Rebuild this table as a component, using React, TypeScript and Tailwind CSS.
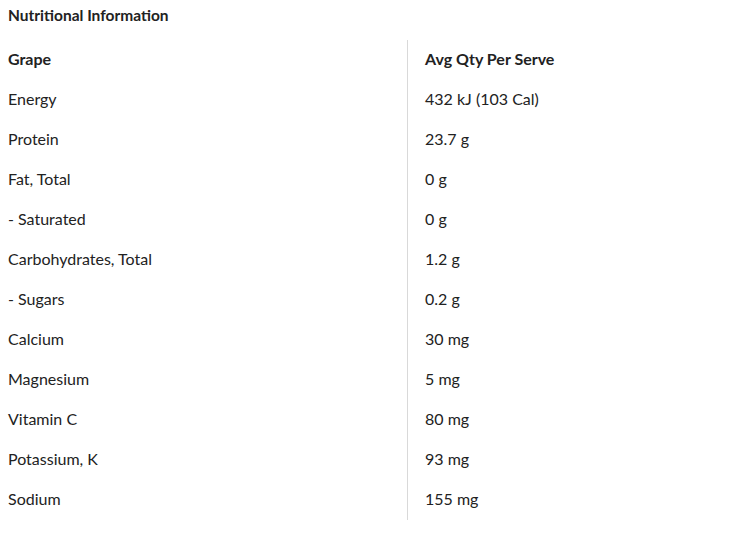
import React from "react";

const rows: [string, string][] = [
  ["Energy", "432 kJ (103 Cal)"],
  ["Protein", "23.7 g"],
  ["Fat, Total", "0 g"],
  ["- Saturated", "0 g"],
  ["Carbohydrates, Total", "1.2 g"],
  ["- Sugars", "0.2 g"],
  ["Calcium", "30 mg"],
  ["Magnesium", "5 mg"],
  ["Vitamin C", "80 mg"],
  ["Potassium, K", "93 mg"],
  ["Sodium", "155 mg"],
];

export default function App() {
  return (
    <div className="w-[736px] h-[543px] bg-white text-[#222] font-['Lato',sans-serif]">
      <div className="pl-2 pt-[5px] h-[40px] text-[15.5px] font-bold leading-[20px]">Nutritional Information</div>
      <div className="flex w-[736px]">
        <div className="w-[407px] flex flex-col">
          <div className="h-[40px] pl-2 pb-[2px] flex items-center text-[16px] font-bold">Grape</div>
          {rows.map(([k]) => (
            <div key={k} className="h-[40px] pl-2 pb-[2px] flex items-center text-[16px]">{k}</div>
          ))}
        </div>
        <div className="flex-1 flex flex-col border-l border-[#d9d9d9]">
          <div className="h-[40px] pl-[17px] pb-[2px] flex items-center text-[16px] font-bold">Avg Qty Per Serve</div>
          {rows.map(([k, v]) => (
            <div key={k} className="h-[40px] pl-[17px] pb-[2px] flex items-center text-[16px]">{v}</div>
          ))}
        </div>
      </div>
    </div>
  );
}
